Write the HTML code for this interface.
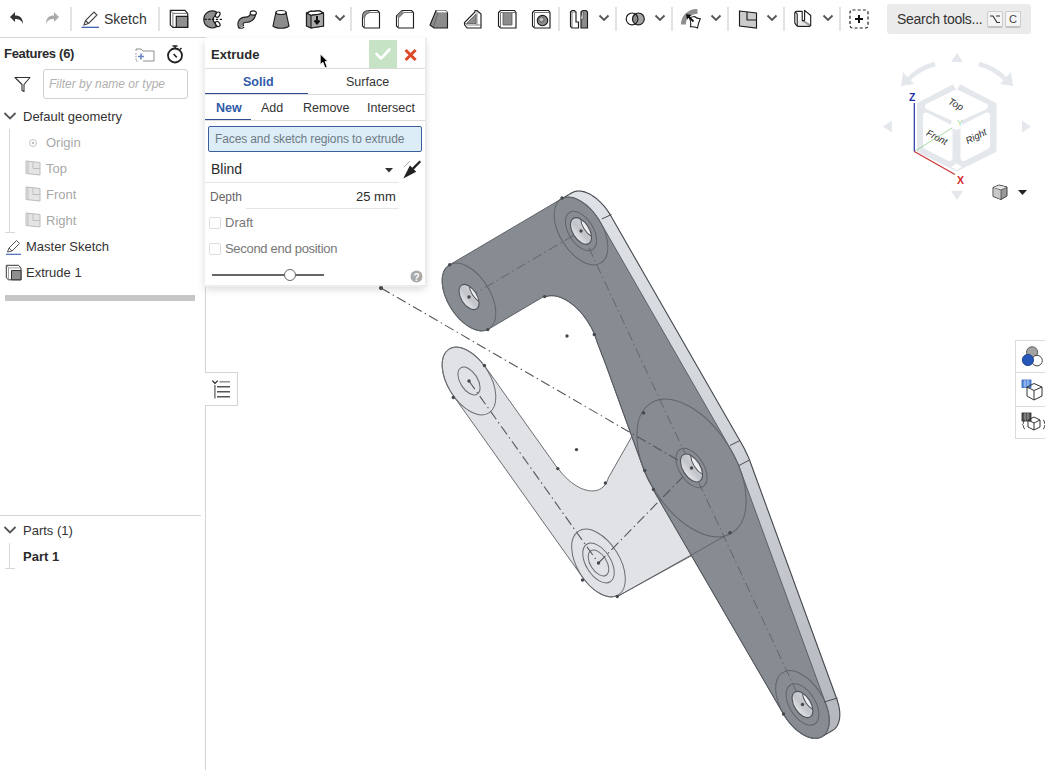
<!DOCTYPE html>
<html><head><meta charset="utf-8">
<style>
*{box-sizing:border-box;margin:0;padding:0}
html,body{width:1045px;height:770px;overflow:hidden;background:#fff;font-family:"Liberation Sans",sans-serif;color:#333}
.abs{position:absolute}
#tb{position:absolute;left:0;top:0;width:1045px;height:37px;background:#fff}
.sep{position:absolute;top:7px;width:2px;height:24px;background:#e3e3e3}
.chev{position:absolute;top:14px;width:12px;height:8px}
#left{position:absolute;left:0;top:37px;width:206px;height:733px;background:#fff;border-right:1px solid #d4d4d4}
.ti{position:absolute;font-size:13px;color:#333;white-space:nowrap}
.dim{color:#a8a8a8}
#dlg{position:absolute;left:205px;top:38px;width:220px;height:247px;background:#fff;box-shadow:1px 1px 0 1px #ececec,0 4px 8px rgba(0,0,0,.16)}
</style></head><body>
<!--MODEL--><svg class="abs" style="left:0;top:0" width="1045" height="770" viewBox="0 0 1045 770"><defs><linearGradient id="bg" gradientUnits="userSpaceOnUse" x1="560" y1="190" x2="840" y2="740"><stop offset="0" stop-color="#dfe2e7"/><stop offset="0.45" stop-color="#d2d5da"/><stop offset="1" stop-color="#b3b6bc"/></linearGradient><linearGradient id="hg" x1="0" y1="0" x2="0.3" y2="1"><stop offset="0" stop-color="#d2d5d9"/><stop offset="0.6" stop-color="#c0c3c8"/><stop offset="1" stop-color="#dfe1e4"/></linearGradient></defs>
<path d="M454.4 347.3 L453.2 347.5 L452.1 347.8 L451.1 348.1 L450.0 348.6 L449.1 349.1 L448.2 349.7 L447.3 350.5 L446.5 351.3 L445.8 352.1 L445.1 353.1 L444.5 354.1 L444.0 355.3 L443.5 356.4 L443.1 357.7 L442.8 359.0 L442.5 360.4 L442.3 361.8 L442.2 363.3 L442.2 364.8 L442.2 366.4 L442.3 368.0 L442.5 369.7 L442.8 371.3 L443.1 373.0 L443.5 374.8 L444.0 376.5 L444.5 378.3 L445.1 380.0 L445.8 381.8 L446.5 383.6 L447.3 385.3 L448.2 387.1 L449.1 388.8 L450.0 390.5 L451.0 392.2 L452.1 393.9 L453.2 395.5 L582.7 577.5 L583.9 579.1 L585.1 580.6 L586.3 582.1 L587.6 583.5 L588.9 584.9 L590.2 586.2 L591.6 587.5 L592.9 588.7 L594.3 589.8 L595.7 590.8 L597.1 591.8 L598.5 592.7 L599.9 593.5 L601.3 594.2 L602.7 594.8 L604.1 595.4 L605.4 595.9 L606.8 596.2 L608.1 596.5 L609.4 596.7 L610.7 596.8 L611.9 596.8 L613.1 596.7 L614.3 596.5 L615.4 596.2 L616.4 595.9 L616.9 595.7 L617.3 596.5 L691.7 555.6 L720.0 520.0 L680.0 440.0 L631.4 437.3 L608.2 478.1 L608.2 478.1 L607.7 479.7 L607.1 481.1 L606.5 482.5 L605.7 483.7 L604.9 484.9 L604.0 486.0 L603.0 487.0 L602.0 487.8 L600.9 488.6 L599.7 489.3 L598.4 489.8 L597.1 490.3 L595.8 490.6 L594.4 490.8 L592.9 490.9 L591.4 490.9 L589.8 490.8 L588.2 490.6 L586.6 490.2 L585.0 489.8 L583.3 489.2 L581.6 488.6 L579.9 487.8 L578.2 486.9 L576.5 485.9 L574.8 484.8 L573.1 483.6 L571.4 482.4 L569.7 481.0 L568.0 479.5 L566.4 478.0 L564.7 476.4 L563.1 474.7 L561.6 473.0 L560.1 471.1 L558.6 469.3 L558.2 468.7 L557.8 468.6 L484.4 365.5 L484.2 365.7 L483.6 364.9 L482.4 363.4 L481.2 361.9 L479.9 360.5 L478.6 359.1 L477.3 357.8 L475.9 356.5 L474.6 355.3 L473.2 354.2 L471.8 353.2 L470.4 352.2 L469.0 351.3 L467.6 350.5 L466.2 349.8 L464.8 349.2 L463.4 348.6 L462.1 348.1 L460.7 347.8 L459.4 347.5 L458.1 347.3 L456.8 347.2 L455.6 347.2Z" fill="#e0e2e5" stroke="#6a6d72" stroke-width="1"/>
<path d="M573.6 191.9 L572.5 192.4 L571.6 192.9 L571.3 193.1 L571.2 193.1 L570.3 193.7 L569.9 193.9 L569.9 193.9 L569.0 194.5 L568.6 194.7 L568.6 194.7 L567.6 195.2 L567.3 195.5 L567.3 195.5 L566.3 196.0 L566.0 196.2 L566.0 196.2 L565.0 196.8 L564.7 197.0 L564.7 197.0 L563.7 197.6 L563.4 197.8 L563.4 197.8 L562.4 198.3 L562.1 198.6 L562.0 198.6 L561.1 199.1 L560.2 199.7 L559.3 200.5 L558.5 201.3 L557.8 202.1 L557.1 203.1 L556.5 204.1 L556.0 205.3 L555.5 206.4 L555.1 207.7 L554.8 209.0 L554.5 210.4 L554.3 211.8 L554.2 213.3 L554.2 214.8 L554.2 216.4 L554.3 218.0 L554.5 219.7 L554.8 221.3 L555.1 223.0 L555.5 224.8 L556.0 226.5 L556.5 228.3 L557.1 230.0 L566.7 256.7 L544.6 296.6 L545.0 296.9 L545.5 296.6 L546.8 296.2 L548.1 295.9 L549.5 295.7 L551.0 295.6 L552.4 295.6 L554.0 295.7 L555.5 295.9 L557.1 296.2 L558.7 296.7 L560.3 297.2 L562.0 297.9 L563.7 298.7 L565.3 299.5 L567.0 300.5 L568.7 301.6 L570.4 302.7 L572.0 304.0 L573.7 305.3 L575.3 306.7 L576.9 308.2 L578.5 309.8 L580.1 311.4 L581.6 313.2 L583.1 314.9 L584.5 316.8 L585.9 318.7 L587.2 320.6 L588.5 322.6 L589.7 324.6 L590.9 326.6 L592.0 328.7 L593.0 330.8 L593.9 332.9 L594.8 335.0 L595.6 337.1 L596.3 339.3 L597.0 341.4 L597.1 341.8 L606.2 365.5 L642.6 466.0 L643.9 469.7 L645.4 473.3 L647.1 476.9 L648.8 480.5 L650.7 484.0 L652.7 487.5 L653.0 488.2 L653.4 489.1 L653.4 489.1 L653.4 489.1 L653.3 489.2 L653.3 489.2 L653.3 489.2 L653.3 489.2 L653.3 489.2 L653.2 489.3 L653.2 489.3 L653.2 489.3 L653.2 489.3 L653.2 489.4 L653.2 489.4 L653.2 489.4 L653.2 489.5 L653.2 489.5 L653.2 489.5 L653.2 489.5 L783.5 714.0 L784.5 715.7 L785.6 717.4 L786.7 719.0 L787.9 720.6 L789.1 722.1 L790.3 723.6 L791.6 725.0 L792.9 726.4 L794.2 727.7 L795.6 729.0 L796.9 730.2 L798.3 731.3 L799.7 732.3 L801.1 733.3 L802.5 734.2 L803.9 735.0 L805.3 735.7 L806.7 736.3 L808.1 736.9 L809.4 737.4 L810.8 737.7 L812.1 738.0 L813.4 738.2 L814.7 738.3 L815.9 738.3 L817.1 738.2 L818.3 738.0 L819.4 737.7 L820.4 737.4 L821.5 736.9 L822.4 736.4 L822.7 736.2 L822.8 736.2 L823.7 735.6 L824.1 735.4 L824.1 735.4 L825.0 734.8 L825.4 734.6 L825.4 734.6 L826.4 734.1 L826.7 733.8 L826.7 733.8 L827.7 733.3 L828.0 733.1 L828.0 733.1 L829.0 732.5 L829.3 732.3 L829.3 732.3 L830.3 731.7 L830.6 731.5 L830.6 731.5 L831.6 731.0 L831.9 730.7 L832.0 730.7 L832.9 730.2 L833.8 729.6 L834.7 728.8 L835.5 728.0 L836.2 727.2 L836.9 726.2 L837.5 725.2 L838.0 724.0 L838.5 722.9 L838.9 721.6 L839.2 720.3 L839.5 718.9 L839.7 717.5 L839.8 716.0 L839.8 714.5 L839.8 712.9 L839.7 711.3 L839.5 709.6 L839.2 708.0 L838.9 706.3 L838.5 704.5 L838.0 702.8 L837.5 701.0 L836.9 699.3 L750.9 463.8 L749.6 460.1 L748.1 456.5 L746.4 452.9 L744.7 449.3 L742.8 445.8 L740.8 442.3 L610.5 215.3 L609.5 213.6 L608.4 211.9 L607.3 210.3 L606.1 208.7 L604.9 207.2 L603.7 205.7 L602.4 204.3 L601.1 202.9 L599.8 201.6 L598.4 200.3 L597.1 199.1 L595.7 198.0 L594.3 197.0 L592.9 196.0 L591.5 195.1 L590.1 194.3 L588.7 193.6 L587.3 193.0 L585.9 192.4 L584.6 191.9 L583.2 191.6 L581.9 191.3 L580.6 191.1 L579.3 191.0 L578.1 191.0 L576.9 191.1 L575.7 191.3 L574.6 191.6Z" fill="url(#bg)" stroke="#44474c" stroke-width="1.1"/>
<path d="M565.2 197.5 L564.1 197.8 L563.1 198.1 L562.0 198.6 L561.1 199.1 L449.1 265.1 L448.2 265.7 L447.3 266.5 L446.5 267.3 L445.8 268.1 L445.1 269.1 L444.5 270.1 L444.0 271.3 L443.5 272.4 L443.1 273.7 L442.8 275.0 L442.5 276.4 L442.3 277.8 L442.2 279.3 L442.2 280.8 L442.2 282.4 L442.3 284.0 L442.5 285.7 L442.8 287.3 L443.1 289.0 L443.5 290.8 L444.0 292.5 L444.5 294.3 L445.1 296.0 L445.8 297.8 L446.5 299.6 L447.3 301.3 L448.2 303.1 L449.1 304.8 L450.0 306.5 L451.0 308.2 L452.1 309.9 L453.2 311.5 L454.4 313.1 L455.6 314.6 L456.8 316.1 L458.1 317.5 L459.4 318.9 L460.7 320.2 L462.1 321.5 L463.4 322.7 L464.8 323.8 L466.2 324.8 L467.6 325.8 L469.0 326.7 L470.4 327.5 L471.8 328.2 L473.2 328.8 L474.6 329.4 L475.9 329.9 L477.3 330.2 L478.6 330.5 L479.9 330.7 L481.2 330.8 L482.4 330.8 L483.6 330.7 L484.8 330.5 L485.9 330.2 L486.9 329.9 L488.0 329.4 L488.9 328.9 L545.0 295.8 L544.6 296.6 L545.0 296.9 L545.5 296.6 L546.8 296.2 L548.1 295.9 L549.5 295.7 L551.0 295.6 L552.4 295.6 L554.0 295.7 L555.5 295.9 L557.1 296.2 L558.7 296.7 L560.3 297.2 L562.0 297.9 L563.7 298.7 L565.3 299.5 L567.0 300.5 L568.7 301.6 L570.4 302.7 L572.0 304.0 L573.7 305.3 L575.3 306.7 L576.9 308.2 L578.5 309.8 L580.1 311.4 L581.6 313.2 L583.1 314.9 L584.5 316.8 L585.9 318.7 L587.2 320.6 L588.5 322.6 L589.7 324.6 L590.9 326.6 L592.0 328.7 L593.0 330.8 L593.9 332.9 L594.8 335.0 L595.6 337.1 L596.3 339.3 L597.0 341.4 L597.1 341.8 L606.2 365.5 L642.6 466.0 L643.9 469.7 L645.4 473.3 L647.1 476.9 L648.8 480.5 L650.7 484.0 L652.7 487.5 L653.0 488.2 L653.4 489.1 L653.4 489.1 L653.4 489.1 L653.3 489.2 L653.3 489.2 L653.3 489.2 L653.3 489.2 L653.3 489.2 L653.2 489.3 L653.2 489.3 L653.2 489.3 L653.2 489.3 L653.2 489.4 L653.2 489.4 L653.2 489.4 L653.2 489.5 L653.2 489.5 L653.2 489.5 L653.2 489.5 L783.5 714.0 L784.5 715.7 L785.6 717.4 L786.7 719.0 L787.9 720.6 L789.1 722.1 L790.3 723.6 L791.6 725.0 L792.9 726.4 L794.2 727.7 L795.6 729.0 L796.9 730.2 L798.3 731.3 L799.7 732.3 L801.1 733.3 L802.5 734.2 L803.9 735.0 L805.3 735.7 L806.7 736.3 L808.1 736.9 L809.4 737.4 L810.8 737.7 L812.1 738.0 L813.4 738.2 L814.7 738.3 L815.9 738.3 L817.1 738.2 L818.3 738.0 L819.4 737.7 L820.4 737.4 L821.5 736.9 L822.4 736.4 L823.3 735.8 L824.2 735.0 L825.0 734.2 L825.7 733.4 L826.4 732.4 L827.0 731.4 L827.5 730.2 L828.0 729.1 L828.4 727.8 L828.7 726.5 L829.0 725.1 L829.2 723.7 L829.3 722.2 L829.3 720.7 L829.3 719.1 L829.2 717.5 L829.0 715.8 L828.7 714.2 L828.4 712.5 L828.0 710.7 L827.5 709.0 L827.0 707.2 L826.4 705.5 L740.4 470.0 L739.1 466.3 L737.6 462.7 L735.9 459.1 L734.2 455.5 L732.3 452.0 L730.3 448.5 L600.0 221.5 L599.0 219.8 L597.9 218.1 L596.8 216.5 L595.6 214.9 L594.4 213.4 L593.2 211.9 L591.9 210.5 L590.6 209.1 L589.3 207.8 L587.9 206.5 L586.6 205.3 L585.2 204.2 L583.8 203.2 L582.4 202.2 L581.0 201.3 L579.6 200.5 L578.2 199.8 L576.8 199.2 L575.4 198.6 L574.1 198.1 L572.7 197.8 L571.4 197.5 L570.1 197.3 L568.8 197.2 L567.6 197.2 L566.4 197.3Z" fill="#878b92" stroke="#55585e" stroke-width="0.9"/>
<ellipse cx="581.0" cy="231.0" rx="37.6" ry="21.2" transform="rotate(58.0 581.0 231.0)" fill="none" stroke="#62656a" stroke-width="1"/>
<ellipse cx="691.5" cy="468.0" rx="76.5" ry="43.1" transform="rotate(58.0 691.5 468.0)" fill="none" stroke="#62656a" stroke-width="1"/>
<ellipse cx="469.0" cy="297.0" rx="37.6" ry="21.2" transform="rotate(58.0 469.0 297.0)" fill="none" stroke="#62656a" stroke-width="1"/>
<ellipse cx="802.5" cy="704.5" rx="37.6" ry="21.2" transform="rotate(58.0 802.5 704.5)" fill="none" stroke="#62656a" stroke-width="1"/>
<ellipse cx="469.0" cy="381.0" rx="37.6" ry="21.2" transform="rotate(58.0 469.0 381.0)" fill="none" stroke="#6a6d72" stroke-width="1"/>
<ellipse cx="598.5" cy="563.0" rx="37.6" ry="21.2" transform="rotate(58.0 598.5 563.0)" fill="none" stroke="#6a6d72" stroke-width="1"/>
<ellipse cx="469.0" cy="381.0" rx="15.5" ry="8.7" transform="rotate(58.0 469.0 381.0)" fill="none" stroke="#6a6d72" stroke-width="1"/>
<ellipse cx="598.5" cy="563.0" rx="22.1" ry="12.4" transform="rotate(58.0 598.5 563.0)" fill="none" stroke="#6a6d72" stroke-width="1"/>
<ellipse cx="598.5" cy="563.0" rx="14.4" ry="8.1" transform="rotate(58.0 598.5 563.0)" fill="none" stroke="#6a6d72" stroke-width="1"/>
<path d="M617.3 596.5 L729 533.8" fill="none" stroke="#62656a" stroke-width="1"/>
<path d="M469 297 L581 231" fill="none" stroke="#62656b" stroke-width="1" stroke-dasharray="10 3.5 1.5 3.5"/>
<path d="M581 231 L802.5 704.5" fill="none" stroke="#62656b" stroke-width="1" stroke-dasharray="10 3.5 1.5 3.5"/>
<path d="M601.8 219 L611.5 214.5" stroke="#4a4d52" stroke-width="1"/>
<path d="M730 445.5 L740 440.5" stroke="#4a4d52" stroke-width="1"/>
<path d="M739 465.5 L749.5 460" stroke="#4a4d52" stroke-width="1"/>
<path d="M824 702 L837.5 698" stroke="#4a4d52" stroke-width="1"/>
<path d="M469 381 L598.5 563" fill="none" stroke="#55585d" stroke-width="1.1" stroke-dasharray="10 3.5 1.5 3.5"/>
<path d="M598.5 563 L691.5 468" fill="none" stroke="#55585d" stroke-width="1.1" stroke-dasharray="10 3.5 1.5 3.5"/>
<path d="M381 288 L691.5 468" fill="none" stroke="#55585d" stroke-width="1.1" stroke-dasharray="10 3.5 1.5 3.5"/>
<clipPath id="h469"><ellipse cx="469.0" cy="297.0" rx="14.0" ry="7.9" transform="rotate(58.0 469.0 297.0)" /></clipPath>
<ellipse cx="469.0" cy="297.0" rx="14.0" ry="7.9" transform="rotate(58.0 469.0 297.0)" fill="url(#hg)"/>
<g clip-path="url(#h469)"><ellipse cx="479.2" cy="290.6" rx="14.0" ry="7.9" transform="rotate(58.0 479.2 290.6)" fill="#eceef0" stroke="#505358" stroke-width="1"/></g>
<ellipse cx="469.0" cy="297.0" rx="14.0" ry="7.9" transform="rotate(58.0 469.0 297.0)" fill="none" stroke="#505358" stroke-width="1.1"/>
<ellipse cx="581.0" cy="231.0" rx="21.8" ry="12.3" transform="rotate(58.0 581.0 231.0)" fill="none" stroke="#62656a" stroke-width="1"/>
<clipPath id="h581"><ellipse cx="581.0" cy="231.0" rx="14.8" ry="8.3" transform="rotate(58.0 581.0 231.0)" /></clipPath>
<ellipse cx="581.0" cy="231.0" rx="14.8" ry="8.3" transform="rotate(58.0 581.0 231.0)" fill="url(#hg)"/>
<g clip-path="url(#h581)"><ellipse cx="591.2" cy="224.6" rx="14.8" ry="8.3" transform="rotate(58.0 591.2 224.6)" fill="#eceef0" stroke="#505358" stroke-width="1"/></g>
<ellipse cx="581.0" cy="231.0" rx="14.8" ry="8.3" transform="rotate(58.0 581.0 231.0)" fill="none" stroke="#505358" stroke-width="1.1"/>
<ellipse cx="691.5" cy="468.0" rx="21.8" ry="12.3" transform="rotate(58.0 691.5 468.0)" fill="none" stroke="#62656a" stroke-width="1"/>
<clipPath id="h691"><ellipse cx="691.5" cy="468.0" rx="15.5" ry="8.7" transform="rotate(58.0 691.5 468.0)" /></clipPath>
<ellipse cx="691.5" cy="468.0" rx="15.5" ry="8.7" transform="rotate(58.0 691.5 468.0)" fill="url(#hg)"/>
<g clip-path="url(#h691)"><ellipse cx="701.7" cy="461.6" rx="15.5" ry="8.7" transform="rotate(58.0 701.7 461.6)" fill="#eceef0" stroke="#505358" stroke-width="1"/></g>
<ellipse cx="691.5" cy="468.0" rx="15.5" ry="8.7" transform="rotate(58.0 691.5 468.0)" fill="none" stroke="#505358" stroke-width="1.1"/>
<ellipse cx="802.5" cy="704.5" rx="23.0" ry="12.9" transform="rotate(58.0 802.5 704.5)" fill="none" stroke="#62656a" stroke-width="1"/>
<clipPath id="h802"><ellipse cx="802.5" cy="704.5" rx="14.6" ry="8.2" transform="rotate(58.0 802.5 704.5)" /></clipPath>
<ellipse cx="802.5" cy="704.5" rx="14.6" ry="8.2" transform="rotate(58.0 802.5 704.5)" fill="url(#hg)"/>
<g clip-path="url(#h802)"><ellipse cx="812.7" cy="698.1" rx="14.6" ry="8.2" transform="rotate(58.0 812.7 698.1)" fill="#eceef0" stroke="#505358" stroke-width="1"/></g>
<ellipse cx="802.5" cy="704.5" rx="14.6" ry="8.2" transform="rotate(58.0 802.5 704.5)" fill="none" stroke="#505358" stroke-width="1.1"/>
<circle cx="381" cy="288" r="1.7" fill="#45484d"/>
<circle cx="567" cy="336" r="1.7" fill="#45484d"/>
<circle cx="576.5" cy="449.6" r="1.7" fill="#45484d"/>
<circle cx="469" cy="381" r="1.7" fill="#45484d"/>
<circle cx="598.5" cy="563" r="1.7" fill="#45484d"/>
<circle cx="469" cy="297" r="1.7" fill="#45484d"/>
<circle cx="581" cy="231" r="1.7" fill="#45484d"/>
<circle cx="691.5" cy="468" r="1.7" fill="#45484d"/>
<circle cx="802.5" cy="704.5" r="1.7" fill="#45484d"/>
<circle cx="544.6" cy="296.6" r="1.7" fill="#45484d"/>
<circle cx="594.3" cy="334.5" r="1.7" fill="#45484d"/>
<circle cx="653.5" cy="489.4" r="1.7" fill="#45484d"/>
<circle cx="484.4" cy="365.5" r="1.7" fill="#45484d"/>
<circle cx="453.3" cy="397.5" r="1.7" fill="#45484d"/>
<circle cx="557.8" cy="468.6" r="1.7" fill="#45484d"/>
<circle cx="605.4" cy="483" r="1.7" fill="#45484d"/>
<circle cx="582.5" cy="580" r="1.7" fill="#45484d"/>
<circle cx="617.3" cy="596.5" r="1.7" fill="#45484d"/>
<circle cx="643.6" cy="413" r="1.7" fill="#45484d"/>
<circle cx="644.7" cy="470.4" r="1.7" fill="#45484d"/>
<circle cx="730" cy="532.7" r="1.7" fill="#45484d"/>
<circle cx="783.5" cy="714.0" r="1.7" fill="#45484d"/>
<circle cx="449.7" cy="264.7" r="1.7" fill="#45484d"/>
<circle cx="487.8" cy="329.6" r="1.7" fill="#45484d"/>
<circle cx="562" cy="198" r="1.7" fill="#45484d"/>
</svg><!--/MODEL-->
<div id="tb">
  <!-- undo / redo -->
  <svg class="abs" style="left:9px;top:10px" width="16" height="16" viewBox="0 0 16 16"><path d="M6 2 L1 7 L6 12 V9 C10 9 12.5 10 14 14 C14 8 11 5.5 6 5.5 Z" fill="#333"/></svg>
  <svg class="abs" style="left:44px;top:10px" width="16" height="16" viewBox="0 0 16 16"><path d="M10 2 L15 7 L10 12 V9 C6 9 3.5 10 2 14 C2 8 5 5.5 10 5.5 Z" fill="#aaa"/></svg>
  <div class="sep" style="left:70px"></div>
  <svg class="abs" style="left:81px;top:10px" width="19" height="18" viewBox="0 0 19 18"><path d="M3 15 L4.5 10.5 L13 2 L16 5 L7.5 13.5 Z M4.5 10.5 L7.5 13.5" fill="none" stroke="#444" stroke-width="1.1"/><path d="M0.5 17.3 H18" stroke="#3355aa" stroke-width="1.2"/></svg>
  <div class="abs" style="left:104px;top:11px;font-size:14px;color:#333">Sketch</div>
  <div class="sep" style="left:158px"></div>
<svg class="abs" style="left:169px;top:9px" width="20" height="20" viewBox="0 0 20 20"><path d="M1.3 1.3 H15.9 L18.7 4.4 V18.4 H3.9 L1.3 16.1 Z" fill="#fff" stroke="#1e1e1e" stroke-width="1.2" stroke-linejoin="miter"/><path d="M1.3 1.3 L3.9 4.4 H18.7 M3.9 4.4 V18.4" fill="none" stroke="#555" stroke-width="0.8"/><path d="M7.3 7.3 H18.7 V18.4 H7.3 Z" fill="#8f8f8f" stroke="#1e1e1e" stroke-width="1.2" stroke-linejoin="miter"/></svg>
<svg class="abs" style="left:203px;top:9px" width="20" height="20" viewBox="0 0 20 20"><path d="M13.5 3 A8.5 8.5 0 1 0 13.5 17.8 L11.9 13.6 A3.6 3.6 0 0 1 11.9 7.3 Z" fill="#8f8f8f" stroke="#1e1e1e" stroke-width="1.2" stroke-linejoin="miter"/><ellipse cx="14.7" cy="5.7" rx="1.9" ry="2.9" transform="rotate(35 14.7 5.7)" fill="#fff" stroke="#1e1e1e" stroke-width="1.2" stroke-linejoin="miter"/><ellipse cx="14.7" cy="15" rx="1.9" ry="2.9" transform="rotate(-35 14.7 15)" fill="#fff" stroke="#1e1e1e" stroke-width="1.2" stroke-linejoin="miter"/><path d="M1.5 10.4 H19.5" stroke="#111" stroke-width="1.1" stroke-dasharray="2.2 1.6"/></svg>
<svg class="abs" style="left:237px;top:9px" width="20" height="20" viewBox="0 0 20 20"><path d="M4.2 18 C2.5 14 4 11 8.5 10.8 C13 10.6 15.5 9 16.2 4.5" fill="none" stroke="#1e1e1e" stroke-width="6.4" stroke-linecap="butt"/><path d="M4.2 18 C2.5 14 4 11 8.5 10.8 C13 10.6 15.5 9 16.2 4.5" fill="none" stroke="#8f8f8f" stroke-width="4.2"/><path d="M1.3 18.3 C2.5 19.8 5.8 19.6 7.2 17.8" fill="none" stroke="#1e1e1e" stroke-width="1.1"/><ellipse cx="16.3" cy="4" rx="3.1" ry="2.1" fill="#fff" stroke="#1e1e1e" stroke-width="1.1"/></svg>
<svg class="abs" style="left:271px;top:9px" width="20" height="20" viewBox="0 0 20 20"><path d="M5 3 L2 17 C5 20 15 20 18 17 L15 3 Z" fill="#8c8c8c" stroke="#1e1e1e" stroke-width="1.15" stroke-linejoin="miter"/><ellipse cx="10" cy="3.5" rx="5" ry="2" fill="#fff" stroke="#1e1e1e" stroke-width="1.15" stroke-linejoin="miter"/></svg>
<svg class="abs" style="left:305px;top:9px" width="20" height="20" viewBox="0 0 20 20"><path d="M1.5 4 L6 2 C9 3 12 1 15 2 L18.5 4 V17 L6 19 L1.5 17 Z" fill="#fff" stroke="#1e1e1e" stroke-width="1.15" stroke-linejoin="miter"/><path d="M1.5 4 L6 6.5 V19 M6 6.5 C9 5.5 12 6.5 18.5 4" fill="none" stroke="#1e1e1e" stroke-width="1.15" stroke-linejoin="miter"/><path d="M1.5 4 L6 6.5 V19 L1.5 17Z" fill="#8c8c8c"/><path d="M6 6.5 C9 5.5 12 6.5 18.5 4 V17 L6 19Z" fill="#aaa"/><path d="M1.5 4 L6 2 C9 3 12 1 15 2 L18.5 4 V17 L6 19 L1.5 17 Z M1.5 4 L6 6.5 V19 M6 6.5 C9 5.5 12 6.5 18.5 4" fill="none" stroke="#1e1e1e" stroke-width="1.15" stroke-linejoin="miter"/><path d="M12 7 V14 M9.5 11.5 L12 14.5 L14.5 11.5" fill="none" stroke="#111" stroke-width="2"/></svg>
<svg class="abs" style="left:361px;top:9px" width="20" height="20" viewBox="0 0 20 20"><path d="M1.5 8 C1.5 4 4 1.5 8 1.5 H16.5 L18.5 3.5 V19 H3.5 L1.5 17 Z" fill="#fff" stroke="#1e1e1e" stroke-width="1.15" stroke-linejoin="miter"/><path d="M1.5 8 C1.5 4 4 1.5 8 1.5 L10 3.5 C7 3.5 3.5 6 3.5 10 Z" fill="#8c8c8c"/><path d="M3.5 19 V10 C3.5 6 7 3.5 10 3.5 H18.5" fill="none" stroke="#555" stroke-width="0.8"/></svg>
<svg class="abs" style="left:395px;top:9px" width="20" height="20" viewBox="0 0 20 20"><path d="M1.5 7 L7 1.5 H16.5 L18.5 3.5 V19 H3.5 L1.5 17 Z" fill="#fff" stroke="#1e1e1e" stroke-width="1.15" stroke-linejoin="miter"/><path d="M1.5 7 L7 1.5 L9 3.5 L3.5 9 Z" fill="#8c8c8c"/><path d="M3.5 19 V9 L9 3.5 H18.5" fill="none" stroke="#555" stroke-width="0.8"/></svg>
<svg class="abs" style="left:429px;top:9px" width="20" height="20" viewBox="0 0 20 20"><path d="M7 1.5 H16.5 L18.5 3.5 V19 H5 L1 16 Z" fill="#8c8c8c" stroke="#1e1e1e" stroke-width="1.15" stroke-linejoin="miter"/><path d="M9 3.5 H18.5 M9 3.5 L4.5 18" fill="none" stroke="#555" stroke-width="0.7"/><path d="M7 1.5 H16.5 L18.5 3.5 H9Z" fill="#fff"/></svg>
<svg class="abs" style="left:463px;top:9px" width="20" height="20" viewBox="0 0 20 20"><path d="M12 1.5 L14 1.5 L18 5 V19 H4 L1.5 15.5 V13.5 L12 3 Z" fill="#fff" stroke="#1e1e1e" stroke-width="1.15" stroke-linejoin="miter"/><path d="M3.5 14.5 L13 5 V14.5 Z" fill="#8c8c8c" stroke="#555" stroke-width="0.8"/><path d="M1.5 13.5 L4 16 H18 M14 1.5 V16" fill="none" stroke="#555" stroke-width="0.7"/></svg>
<svg class="abs" style="left:497px;top:9px" width="20" height="20" viewBox="0 0 20 20"><path d="M1.5 3.5 L3.5 1.5 H17.5 L19 3.5 V19 H3.5 L1.5 17 Z" fill="#fff" stroke="#1e1e1e" stroke-width="1.15" stroke-linejoin="miter"/><rect x="6" y="4" width="9" height="12" fill="#8c8c8c"/><path d="M3.5 19 V3.5 H19 M6 4 V16 H15 V4" fill="none" stroke="#555" stroke-width="0.8"/></svg>
<svg class="abs" style="left:531px;top:9px" width="20" height="20" viewBox="0 0 20 20"><path d="M1.5 3.5 L3.5 1.5 H17.5 L19 3.5 V19 H3.5 L1.5 17 Z" fill="#fff" stroke="#1e1e1e" stroke-width="1.15" stroke-linejoin="miter"/><path d="M3.5 19 V3.5 H19" fill="none" stroke="#555" stroke-width="0.8"/><circle cx="11.5" cy="11.5" r="5.2" fill="#8c8c8c" stroke="#1e1e1e" stroke-width="1.15" stroke-linejoin="miter"/><circle cx="10.5" cy="10.5" r="2.5" fill="#bbb" stroke="#333" stroke-width="0.6"/></svg>
<svg class="abs" style="left:569px;top:9px" width="20" height="20" viewBox="0 0 20 20"><path d="M1.5 3 L3 1.5 H5.5 L7 3 V13 H9.5 V19 H3 L1.5 17.5 Z" fill="#fff" stroke="#1e1e1e" stroke-width="1.15" stroke-linejoin="miter"/><path d="M3 19 V3 H7" fill="none" stroke="#555" stroke-width="0.8"/><path d="M12 19 V3 L13.5 1.5 H17 L18.5 3 V19 Z" fill="#8c8c8c" stroke="#1e1e1e" stroke-width="1.15" stroke-linejoin="miter"/><path d="M14 1.5 V10 H12" fill="#fff" stroke="#555" stroke-width="0.8"/></svg>
<svg class="abs" style="left:625px;top:9px" width="20" height="20" viewBox="0 0 20 20"><path d="M10.25 4.6 A6 6 0 0 1 10.25 15.2 A6 6 0 0 1 10.25 4.6 Z" fill="#8a8a8a"/><path d="M10.25 4.6 A6 6 0 1 1 10.25 15.2 A6 6 0 0 0 10.25 4.6 Z" fill="#a3a3a3"/><circle cx="7.1" cy="9.9" r="5.9" fill="none" stroke="#1e1e1e" stroke-width="1.2" stroke-linejoin="miter"/><circle cx="13.4" cy="9.9" r="5.9" fill="none" stroke="#1e1e1e" stroke-width="1.2" stroke-linejoin="miter"/></svg>
<svg class="abs" style="left:681px;top:9px" width="20" height="20" viewBox="0 0 20 20"><path d="M2.3 15.5 C2.5 8 7.5 3 16.5 2.3" fill="none" stroke="#8f8f8f" stroke-width="5"/><path d="M8.5 9 C10.5 8 12 7.5 13.5 7.5 C15 9 17 9.8 19.3 9.8 C18 12.5 17 15.5 16.5 19 C14.5 18 12 17.5 9.5 17.8 C10 14.5 9.8 11.5 8.5 9 Z" fill="#fff" stroke="#1e1e1e" stroke-width="1.1"/><path d="M12.5 12.5 L7.2 7.2" stroke="#111" stroke-width="1.8"/><path d="M5 5 L10.5 6 L6 10.5 Z" fill="#111"/></svg>
<svg class="abs" style="left:738px;top:9px" width="20" height="20" viewBox="0 0 20 20"><path d="M1.5 2 L18.5 4 V19 L1.5 17 Z" fill="#ccc" stroke="#1e1e1e" stroke-width="1.15" stroke-linejoin="miter"/><path d="M9 3 V11 H18.5" fill="none" stroke="#1e1e1e" stroke-width="1.15" stroke-linejoin="miter"/></svg>
<svg class="abs" style="left:793px;top:9px" width="20" height="20" viewBox="0 0 20 20"><path d="M4.2 11.4 H9.2 L17.2 16.2 H5 Z" fill="#e8e8e8"/><path d="M9.5 11.5 L17.2 16.3" stroke="#9a9a9a" stroke-width="2"/><path d="M1.8 4.4 Q1.8 2.4 3.8 2.4 H9.2 V11.2 Q10.4 12.2 11.6 11.2 V1.4 L17.7 6.5 V16.6 L16.7 17.3 H5.5 Q3.5 17.3 1.8 14 Z" fill="none" stroke="#1e1e1e" stroke-width="1.15" stroke-linejoin="round"/><path d="M2.2 3.2 Q3.8 4 4.2 5 V17" fill="none" stroke="#1e1e1e" stroke-width="1.1"/></svg>
<svg class="abs" style="left:849px;top:9px" width="20" height="20" viewBox="0 0 20 20"><rect x="1" y="1" width="18" height="18" rx="2.5" fill="none" stroke="#222" stroke-width="1.2" stroke-dasharray="3 2.2"/><path d="M10 6 V14 M6 10 H14" stroke="#111" stroke-width="2"/></svg>
<svg class="abs" style="left:334px;top:14px" width="12" height="8" viewBox="0 0 12 8"><path d="M1.5 1.5 L6 6 L10.5 1.5" fill="none" stroke="#555" stroke-width="1.8"/></svg>
<svg class="abs" style="left:598px;top:14px" width="12" height="8" viewBox="0 0 12 8"><path d="M1.5 1.5 L6 6 L10.5 1.5" fill="none" stroke="#555" stroke-width="1.8"/></svg>
<svg class="abs" style="left:654px;top:14px" width="12" height="8" viewBox="0 0 12 8"><path d="M1.5 1.5 L6 6 L10.5 1.5" fill="none" stroke="#555" stroke-width="1.8"/></svg>
<svg class="abs" style="left:710px;top:14px" width="12" height="8" viewBox="0 0 12 8"><path d="M1.5 1.5 L6 6 L10.5 1.5" fill="none" stroke="#555" stroke-width="1.8"/></svg>
<svg class="abs" style="left:766px;top:14px" width="12" height="8" viewBox="0 0 12 8"><path d="M1.5 1.5 L6 6 L10.5 1.5" fill="none" stroke="#555" stroke-width="1.8"/></svg>
<svg class="abs" style="left:822px;top:14px" width="12" height="8" viewBox="0 0 12 8"><path d="M1.5 1.5 L6 6 L10.5 1.5" fill="none" stroke="#555" stroke-width="1.8"/></svg>
  <div class="sep" style="left:350px"></div>
  <div class="sep" style="left:558px"></div>
  <div class="sep" style="left:615px"></div>
  <div class="sep" style="left:671px"></div>
  <div class="sep" style="left:727px"></div>
  <div class="sep" style="left:783px"></div>
  <div class="sep" style="left:839px"></div>
  <div class="abs" style="left:887px;top:4px;width:144px;height:30px;background:#ebebeb;border-radius:3px"></div>
  <div class="abs" style="left:897px;top:11px;font-size:14px;letter-spacing:-0.27px;color:#333">Search tools...</div>
  <div class="abs" style="left:987px;top:11px;width:16px;height:17px;border:1px solid #cdcdcd;border-bottom:2px solid #c2c2c2;border-radius:2px;background:#f5f5f5"></div><svg class="abs" style="left:989px;top:13px" width="12" height="12" viewBox="0 0 12 12"><path d="M1 3 H4 L8 9.5 H11 M7 3 H11" fill="none" stroke="#333" stroke-width="1.2"/></svg>
  <div class="abs" style="left:1005px;top:11px;width:16px;height:17px;border:1px solid #cdcdcd;border-bottom:2px solid #c2c2c2;border-radius:2px;background:#f5f5f5;font-size:11px;text-align:center;line-height:14px;color:#444">C</div>
</div>

<div id="left">
  <div class="ti" style="left:4px;top:9px;font-size:13px;font-weight:bold;color:#2b2b2b;letter-spacing:-0.3px">Features (6)</div>
  <svg class="abs" style="left:135px;top:10px" width="20" height="16" viewBox="0 0 20 16"><path d="M1 4 V2 H6 L8 4 H19 V14 H8" fill="none" stroke="#8e8e8e" stroke-width="1"/><path d="M1 6 V14 H4" fill="none" stroke="#8e8e8e" stroke-width="1" stroke-dasharray="1.5 1.2"/><path d="M6 6.5 V12.5 M3 9.5 H9" stroke="#6b86c6" stroke-width="1.6"/></svg>
  <svg class="abs" style="left:165px;top:7px" width="20" height="20" viewBox="0 0 20 20"><circle cx="10" cy="11.5" r="7" fill="none" stroke="#222" stroke-width="1.8"/><path d="M7.5 2 H12.5 M10 2 V4.5 M16.5 4 L15 5.5" stroke="#222" stroke-width="1.6"/><path d="M8.6 10 L11.8 13.4" stroke="#222" stroke-width="1.6"/></svg>
  <svg class="abs" style="left:14px;top:39px" width="17" height="17" viewBox="0 0 17 17"><path d="M1 1.5 H16 L10 8.5 V15.5 L8 14.5 V8.5 Z" fill="none" stroke="#333" stroke-width="1.1" stroke-linejoin="round"/></svg>
  <div class="abs" style="left:43px;top:32px;width:145px;height:30px;border:1px solid #cfcfcf;border-radius:3px"></div>
  <div class="ti" style="left:49px;top:40px;font-size:12px;font-style:italic;color:#b0b0b0">Filter by name or type</div>
  <svg class="abs" style="left:3px;top:74px" width="14" height="10" viewBox="0 0 14 10"><path d="M1.5 2 L7 7.5 L12.5 2" fill="none" stroke="#555" stroke-width="1.8"/></svg>
  <div class="ti" style="left:23px;top:72px">Default geometry</div>
  <div class="abs" style="left:9px;top:92px;width:1px;height:103px;background:#d8d8d8"></div>
  <div class="abs" style="left:5px;top:195px;width:10px;height:1px;background:#d8d8d8"></div>
  <svg class="abs" style="left:28px;top:101px" width="10" height="10" viewBox="0 0 10 10"><circle cx="5" cy="5" r="3.5" fill="none" stroke="#bdbdbd" stroke-width="0.9"/><circle cx="5" cy="5" r="1.3" fill="#bdbdbd"/></svg>
  <div class="ti dim" style="left:46px;top:98px">Origin</div>
  <svg class="abs" style="left:25px;top:123px" width="17" height="16" viewBox="0 0 17 16"><path d="M1 1 L15 2.5 V15 L1 13.5 Z" fill="#e4e4e4" stroke="#bdbdbd" stroke-width="1"/><path d="M3 1.2 V13.7 M8 2 V8.5 H15" fill="none" stroke="#bdbdbd" stroke-width="1"/></svg>
  <div class="ti dim" style="left:46px;top:124px">Top</div>
  <svg class="abs" style="left:25px;top:149px" width="17" height="16" viewBox="0 0 17 16"><path d="M1 1 L15 2.5 V15 L1 13.5 Z" fill="#e4e4e4" stroke="#bdbdbd" stroke-width="1"/><path d="M3 1.2 V13.7 M8 2 V8.5 H15" fill="none" stroke="#bdbdbd" stroke-width="1"/></svg>
  <div class="ti dim" style="left:46px;top:150px">Front</div>
  <svg class="abs" style="left:25px;top:175px" width="17" height="16" viewBox="0 0 17 16"><path d="M1 1 L15 2.5 V15 L1 13.5 Z" fill="#e4e4e4" stroke="#bdbdbd" stroke-width="1"/><path d="M3 1.2 V13.7 M8 2 V8.5 H15" fill="none" stroke="#bdbdbd" stroke-width="1"/></svg>
  <div class="ti dim" style="left:46px;top:176px">Right</div>
  <svg class="abs" style="left:5px;top:202px" width="18" height="16" viewBox="0 0 18 16"><path d="M2.5 13 L4 9 L11.5 1.5 L14.5 4.5 L7 12 Z M4 9 L7 12" fill="none" stroke="#555" stroke-width="1"/><path d="M1 15.3 H16" stroke="#3a5bb0" stroke-width="1.1"/></svg>
  <div class="ti" style="left:26px;top:202px">Master Sketch</div>
  <svg class="abs" style="left:5px;top:227px" width="17" height="17" viewBox="0 0 17 17"><path d="M1.3 1.3 H13.6 L16 3.9 V15.8 H3.5 L1.3 13.8 Z" fill="#fff" stroke="#333" stroke-width="1"/><path d="M1.3 1.3 L3.5 3.9 H16 M3.5 3.9 V15.8" fill="none" stroke="#777" stroke-width="0.7"/><path d="M6.5 6.5 H16 V15.8 H6.5 Z" fill="#8f8f8f" stroke="#333" stroke-width="1"/></svg>
  <div class="ti" style="left:26px;top:228px">Extrude 1</div>
  <div class="abs" style="left:5px;top:258px;width:190px;height:6px;background:#c6c6c6"></div>
  <div class="abs" style="left:0;top:478px;width:201px;height:1px;background:#d6d6d6"></div>
  <svg class="abs" style="left:3px;top:488px" width="14" height="10" viewBox="0 0 14 10"><path d="M1.5 2 L7 7.5 L12.5 2" fill="none" stroke="#555" stroke-width="1.8"/></svg>
  <div class="ti" style="left:23px;top:486px">Parts (1)</div>
  <div class="abs" style="left:9px;top:506px;width:1px;height:25px;background:#d8d8d8"></div>
  <div class="abs" style="left:5px;top:531px;width:10px;height:1px;background:#d8d8d8"></div>
  <div class="ti" style="left:23px;top:512px;font-weight:bold;color:#2b2b2b">Part 1</div>
</div>

<div class="abs" style="left:0;top:37px;width:206px;height:1px;background:#d4d4d4"></div>
<div id="dlg">
  <div class="ti" style="left:6px;top:9px;font-weight:bold;color:#2b2b2b">Extrude</div>
  <div class="abs" style="left:164px;top:2px;width:28px;height:28px;background:#c6e3c6"></div>
  <svg class="abs" style="left:169px;top:8px" width="18" height="16" viewBox="0 0 18 16"><path d="M2.5 8 L7 12.5 L15.5 3.5" fill="none" stroke="#fff" stroke-width="2.6" stroke-linecap="round" stroke-linejoin="round"/></svg>
  <svg class="abs" style="left:198px;top:9px" width="15" height="15" viewBox="0 0 15 15"><path d="M2.6 3 L12.6 13 M12.6 3 L2.6 13" stroke="#dc4a2a" stroke-width="3" stroke-linecap="butt"/></svg>
  <svg class="abs" style="left:113px;top:14px" width="14" height="17" viewBox="318 52 14 17"><path d="M320.2 53.8 V64.9 L322.9 62.3 L325 67.9 L327.2 67 L325.2 61.6 H328 Z" fill="#000" stroke="#fff" stroke-width="0.9" stroke-linejoin="round"/></svg>
  <div class="abs" style="left:0;top:30px;width:220px;height:1px;background:#dcdcdc"></div>
  <div class="ti" style="left:38px;top:37px;color:#2f5aa8;font-weight:bold;font-size:12.5px">Solid</div>
  <div class="ti" style="left:141px;top:37px;color:#333;font-size:12.5px">Surface</div>
  <div class="abs" style="left:0;top:55px;width:103px;height:2px;background:#2b4f90"></div>
  <div class="abs" style="left:0;top:56px;width:220px;height:1px;background:#dcdcdc"></div>
  <div class="ti" style="left:11px;top:63px;color:#2f5aa8;font-weight:bold;font-size:12.5px">New</div>
  <div class="ti" style="left:56px;top:63px;color:#333;font-size:12.5px">Add</div>
  <div class="ti" style="left:98px;top:63px;color:#333;font-size:12.5px">Remove</div>
  <div class="ti" style="left:162px;top:63px;color:#333;font-size:12.5px">Intersect</div>
  <div class="abs" style="left:0;top:81px;width:46px;height:2px;background:#2b4f90"></div>
  <div class="abs" style="left:0;top:82px;width:220px;height:1px;background:#dcdcdc"></div>
  <div class="abs" style="left:3px;top:88px;width:214px;height:26px;background:#dcedf8;border:1px solid #3b5f9e;border-radius:2px"></div>
  <div class="ti" style="left:10px;top:94px;color:#6f7b84;font-size:12px;letter-spacing:-0.12px">Faces and sketch regions to extrude</div>
  <div class="ti" style="left:6px;top:123px;color:#2b2b2b;font-size:14px">Blind</div>
  <svg class="abs" style="left:180px;top:130px" width="8" height="5" viewBox="0 0 8 5"><path d="M0 0 H8 L4 4.5 Z" fill="#333"/></svg>
  <div class="abs" style="left:0;top:144px;width:194px;height:1px;background:#e6e6e6"></div>
  <svg class="abs" style="left:196px;top:121px" width="24" height="22" viewBox="401 159 24 22"><path d="M420.3 161.3 L411 170.6" stroke="#222" stroke-width="2.3"/><path d="M403.3 178.4 L409.9 165.4 L416.2 171.8 Z" fill="#222"/><path d="M409.8 161.2 L403.8 167.4" stroke="#aaa" stroke-width="1"/></svg>
  <div class="ti" style="left:5px;top:152px;color:#666;font-size:12px">Depth</div>
  <div class="ti" style="left:151px;top:151px;color:#2b2b2b;font-size:13px">25 mm</div>
  <div class="abs" style="left:41px;top:170px;width:153px;height:1px;background:#e6e6e6"></div>
  <div class="abs" style="left:4px;top:179px;width:12px;height:12px;border:1px solid #dedede;border-radius:2px"></div>
  <div class="ti" style="left:20px;top:177px;color:#777;font-size:13px">Draft</div>
  <div class="abs" style="left:4px;top:205px;width:12px;height:12px;border:1px solid #dedede;border-radius:2px"></div>
  <div class="ti" style="left:20px;top:203px;color:#777;font-size:13px;letter-spacing:-0.3px">Second end position</div>
  <div class="abs" style="left:7px;top:236px;width:112px;height:2px;background:#666"></div>
  <div class="abs" style="left:79px;top:231px;width:12px;height:12px;border:1.5px solid #666;border-radius:50%;background:#fff"></div>
  <svg class="abs" style="left:205px;top:232px" width="13" height="13" viewBox="0 0 13 13"><circle cx="6.5" cy="6.5" r="6" fill="#a9a9a9"/><text x="6.5" y="10.5" font-family="Liberation Sans" font-weight="bold" font-size="10" fill="#fff" text-anchor="middle">?</text></svg>
</div>
<div class="abs" style="left:379px;top:286px;width:4px;height:4px;border-radius:50%;background:#45484d"></div>
<!--VC-->
<svg class="abs" style="left:860px;top:40px" width="185" height="180" viewBox="860 40 185 180">
  <g fill="#e4e7ec">
    <path d="M951 53 L957 62 L963 53 Z" transform="rotate(180 957 57.5)"/>
    <path d="M883 126.5 L892 120.5 L892 132.5 Z"/>
    <path d="M1031 126.5 L1022 120.5 L1022 132.5 Z"/>
    <path d="M951 191 L963 191 L957 200 Z"/>
  </g>
  <path d="M935 64 C924 67 915 72 908 80" fill="none" stroke="#e4e7ec" stroke-width="4.5"/>
  <path d="M903 72 L901 86 L914 84 Z" fill="#e4e7ec"/>
  <path d="M979 64 C990 67 999 72 1006 80" fill="none" stroke="#e4e7ec" stroke-width="4.5"/>
  <path d="M1011 72 L1013 86 L1000 84 Z" fill="#e4e7ec"/>
  <path d="M956.5 84 L995 104 V151 L956.5 170 L918.5 151 V104 Z" fill="#e4e7ec" stroke="#e4e7ec" stroke-width="3" stroke-linejoin="round"/>
  <g fill="#fff" stroke="#fff" stroke-width="6" stroke-linejoin="round">
    <path d="M956.5 92.5 L985 106.5 L956.5 119.5 L928 106.5 Z"/>
    <path d="M926 115.5 L949.5 127.5 V158 L926 146 Z"/>
    <path d="M987 115.5 L963.5 127.5 V158 L987 146 Z"/>
  </g>
  <circle cx="956.5" cy="124" r="5.5" fill="#fff"/>
  <path d="M951 167 L956.5 163.5 L962 167 L956.5 170 Z" fill="#fff"/>
  <path d="M953 85 L956.5 80 L960 85 L956.5 90 Z" fill="#fff"/>
  <g font-family="Liberation Sans" font-size="9.5" fill="#2a2a2a" font-style="italic">
    <text x="956" y="107.5" text-anchor="middle" transform="rotate(30 956 104)">Top</text>
    <text x="937" y="140.5" text-anchor="middle" transform="rotate(27 937 137)">Front</text>
    <text x="976" y="139.5" text-anchor="middle" transform="rotate(-27 976 136)">Right</text>
  </g>
  <path d="M914.3 151.5 L952 128" stroke="#8fd08f" stroke-width="0.8"/>
  <text x="957" y="126" font-family="Liberation Sans" font-size="9" fill="#a6dca6">Y</text>
  <path d="M914.3 151.5 V103" stroke="#2233aa" stroke-width="1.2"/>
  <text x="909" y="101" font-family="Liberation Sans" font-weight="bold" font-size="10.5" fill="#2030a8">Z</text>
  <path d="M914.3 151.5 L955 174.5" stroke="#cc3333" stroke-width="1.2"/>
  <text x="957" y="184" font-family="Liberation Sans" font-weight="bold" font-size="10.5" fill="#d42a2a">X</text>
  <g transform="translate(992 184)">
    <path d="M1 3.5 L7 1 L15 3 V12 L9 15.5 L1 12.5 Z" fill="#9a9a9a" stroke="#333" stroke-width="0.9" stroke-linejoin="round"/>
    <path d="M1 3.5 L9 6 L15 3 M9 6 V15.5" fill="none" stroke="#333" stroke-width="0.8"/>
    <path d="M1.5 4 L8.5 6.3 V15 L1.5 12.3 Z" fill="#c8c8c8"/>
    <path d="M1.5 3.6 L7 1.5 L14.5 3.2 L9 5.6 Z" fill="#e6e6e6"/>
  </g>
  <path d="M1018 190 H1027 L1022.5 195 Z" fill="#222"/>
</svg>
<div class="abs" style="left:1015px;top:340px;width:32px;height:99px;border:1px solid #dcdcdc;background:#fff"></div>
<div class="abs" style="left:1015px;top:372px;width:32px;height:1px;background:#dcdcdc"></div>
<div class="abs" style="left:1015px;top:406px;width:32px;height:1px;background:#dcdcdc"></div>
<svg class="abs" style="left:1018px;top:344px" width="27" height="26" viewBox="0 0 27 26">
  <circle cx="14.1" cy="8.3" r="5.6" fill="#a3a3a3" stroke="#444" stroke-width="0.8"/>
  <circle cx="19" cy="16.6" r="5.3" fill="#fff" stroke="#333" stroke-width="0.9"/>
  <circle cx="9.9" cy="16" r="5.6" fill="#2557b9" stroke="#1b3c85" stroke-width="0.9"/>
</svg>
<svg class="abs" style="left:1019px;top:377px" width="26" height="26" viewBox="0 0 26 26">
  <rect x="3" y="3" width="9" height="7.5" fill="#5b8fe0" stroke="#2d5fb8" stroke-width="0.8"/>
  <path d="M6 3 V10.5 M9 3 V10.5" stroke="#d8e6fb" stroke-width="0.8"/>
  <path d="M8 10 L15 6.5 L23 10 V19 L15 23 L8 19 Z M8 10 L15 13.5 L23 10 M15 13.5 V23" fill="none" stroke="#333" stroke-width="1"/>
</svg>
<svg class="abs" style="left:1019px;top:410px" width="26" height="26" viewBox="0 0 26 26">
  <rect x="3" y="3" width="9" height="8" fill="#555" stroke="#222" stroke-width="0.8"/>
  <path d="M6 3 V11 M9 3 V11" stroke="#bbb" stroke-width="0.8"/>
  <path d="M9 10 L15 7 L21 10 V17 L15 20 L9 17 Z M9 10 L15 13 L21 10 M15 13 V20" fill="none" stroke="#333" stroke-width="1"/>
  <path d="M6 10 C4 10 5 14 3.5 14.5 C5 15 4 19 6 19 M24 10 C26 10 25 14 26.5 14.5 C25 15 26 19 24 19" fill="none" stroke="#333" stroke-width="0.9"/>
</svg>
<div class="abs" style="left:205px;top:372px;width:33px;height:34px;border:1px solid #d4d4d4;border-left:none;background:#fff"></div>
<svg class="abs" style="left:205px;top:372px" width="33" height="34" viewBox="205 372 33 34">
  <path d="M212.3 380.6 L215 383.3 L217.7 380.6" fill="none" stroke="#222" stroke-width="1.2"/>
  <path d="M214.9 385 V398.5" stroke="#777" stroke-width="1.5"/>
  <path d="M219.5 381.8 H230" stroke="#888" stroke-width="1.4"/>
  <path d="M217 386.8 H230 M217 391.8 H230 M217 396.8 H230" stroke="#555" stroke-width="1.6"/>
</svg>
<!--/VC-->
</body></html>
